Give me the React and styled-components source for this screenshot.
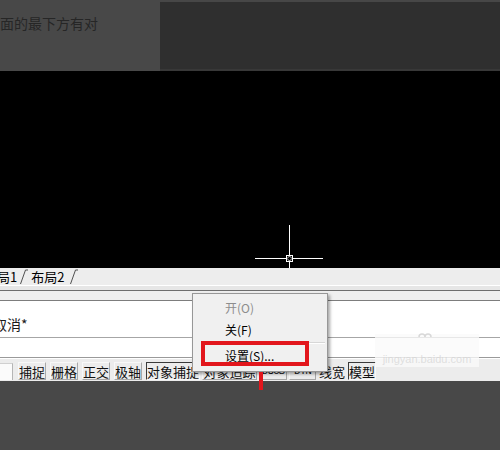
import React from "react";
import styled, { createGlobalStyle } from "styled-components";

const Global = createGlobalStyle`
  html, body { margin: 0; padding: 0; background: #484848; }
  body { width: 500px; height: 450px; overflow: hidden; }
  #root { width: 500px; height: 450px; }
`;

const CJK = `"Noto Sans CJK SC", "Noto Sans", sans-serif`;

const Screen = styled.div`
  position: relative;
  width: 500px;
  height: 450px;
  display: flex;
  flex-direction: column;
  background: #484848;
  overflow: hidden;
  font-family: ${CJK};
`;

const TopBar = styled.div`
  height: 71px;
  display: flex;
  flex: none;
`;

const TopLeft = styled.div`
  width: 160px;
  background: #484848;
  color: #262626;
  font-size: 14px;
  line-height: 16px;
  padding-top: 15px;
  box-sizing: border-box;
  white-space: nowrap;
`;

const TopRight = styled.div`
  flex: 1;
  background: #2f2f2f;
  border-top: 2px solid #474747;
  border-bottom: 2px solid #383838;
`;

const Canvas = styled.div`
  position: relative;
  height: 197px;
  flex: none;
  background: #000;
`;

const Crosshair = styled.svg`
  position: absolute;
  left: 0;
  top: 0;
`;

const TabStrip = styled.div`
  height: 17px;
  flex: none;
  display: flex;
  align-items: center;
  background: #ededed;
  border-bottom: 1px solid #ffffff;
  overflow: hidden;
  font-size: 13px;
  line-height: 15px;
  color: #000;
`;

const Tab = styled.span`
  display: flex;
  align-items: center;
  white-space: nowrap;
  margin-left: ${(p) => p.$offset || 0}px;
`;

const TabText = styled.span`
  padding: 0 ${(p) => p.$pad || 4}px 0 0;
`;

const Splitter = styled.div`
  height: 4px;
  flex: none;
  background: #e6e6e6;
  border-bottom: 1px solid #6e6e6e;
`;

const CmdHeader = styled.div`
  height: 9px;
  flex: none;
  background: #efefef;
  border-bottom: 1px solid #7d7d7d;
`;

const CmdArea = styled.div`
  flex: none;
  background: #fff;
  display: flex;
  flex-direction: column;
  border-bottom: 1px solid #9a9a9a;
`;

const CmdLine = styled.div`
  height: ${(p) => p.$h}px;
  display: flex;
  align-items: flex-end;
  padding-bottom: ${(p) => p.$pb || 0}px;
  box-sizing: border-box;
  border-bottom: ${(p) => (p.$line ? "1px solid #a6a6a6" : "none")};
  font-size: 14px;
  line-height: 16px;
  color: #1a1a1a;
  white-space: nowrap;
  overflow: hidden;
`;

const CmdText = styled.span`
  margin-left: -7px;
`;

const StatusBar = styled.div`
  height: 23px;
  flex: none;
  background: #ececec;
  border-top: 1px solid #ffffff;
  display: flex;
  align-items: flex-end;
  padding-bottom: 1px;
  box-sizing: border-box;
  gap: 4px;
`;

const CoordBox = styled.div`
  width: 13px;
  height: 17px;
  background: #fbfbfb;
  border-right: 1px solid #b5b5b5;
  border-top: 1px solid #d0d0d0;
  box-sizing: border-box;
  margin-right: 1px;
`;

const StatusGroup = styled.div`
  display: flex;
  gap: ${(p) => p.$gap}px;
  align-items: flex-end;
`;

const StatusBtn = styled.div`
  width: ${(p) => p.$w}px;
  height: 18px;
  flex: none;
  box-sizing: border-box;
  padding: 0;
  display: flex;
  align-items: center;
  justify-content: center;
  overflow: hidden;
  font-family: ${(p) => (p.$latin ? `"Liberation Mono", monospace` : CJK)};
  font-size: ${(p) => (p.$latin ? 11 : 13)}px;
  letter-spacing: ${(p) => (p.$latin ? "-1px" : "0")};
  line-height: 15px;
  color: #111;
  white-space: nowrap;
  background: #ececec;
  border: 1px solid;
  border-color: ${(p) =>
    p.$pressed
      ? "#3a3a3a #f8f8f8 #f8f8f8 #3a3a3a"
      : p.$plain
      ? "transparent"
      : "#f8f8f8 #a8a8a8 #a8a8a8 #f8f8f8"};
`;

const Bottom = styled.div`
  flex: 1;
  background: #484848;
`;

const Menu = styled.div`
  position: absolute;
  left: 192px;
  top: 293px;
  width: 136px;
  height: 79px;
  box-sizing: border-box;
  background: #f0f0f0;
  border: 1px solid #979797;
  box-shadow: 2px 2px 3px rgba(0, 0, 0, 0.35);
  padding: 2px 0;
  display: flex;
  flex-direction: column;
`;

const MenuItem = styled.div`
  height: 22px;
  display: flex;
  align-items: center;
  padding-left: 32px;
  font-size: 12px;
  color: ${(p) => (p.$disabled ? "#8d8d8d" : "#000")};
`;

const MenuSep = styled.div`
  height: 1px;
  margin: 2px 2px 0 9px;
  background: #d7d7d7;
  border-bottom: 1px solid #fff;
`;

const Highlight = styled.div`
  position: absolute;
  left: 201px;
  top: 341px;
  width: 108px;
  height: 25px;
  box-sizing: border-box;
  border: 4px solid #e2161c;
`;

const Arrow = styled.div`
  position: absolute;
  left: 259px;
  top: 372px;
  width: 4px;
  height: 18px;
  background: #e2161c;
`;

const Watermark = styled.div`
  position: absolute;
  left: 375px;
  top: 334px;
  width: 104px;
  height: 33px;
  background: rgba(250, 250, 250, 0.78);
  display: flex;
  align-items: flex-end;
  justify-content: center;
  font-family: "Liberation Sans", sans-serif;
  font-size: 11px;
  color: rgba(205, 205, 205, 0.6);
  padding-bottom: 2px;
  box-sizing: border-box;
`;

const WmLogo = styled.svg`
  position: absolute;
  left: 43px;
  top: -5px;
`;

function Slant() {
  return (
    <svg width="8" height="17" viewBox="0 0 8 17">
      <path d="M0.5 16 L5.5 2 L8 2" stroke="#505050" strokeWidth="1" fill="none" />
    </svg>
  );
}

export default function App() {
  return (
    <>
      <Global />
      <Screen>
        <TopBar>
          <TopLeft>面的最下方有对</TopLeft>
          <TopRight />
        </TopBar>
        <Canvas>
          <Crosshair width="500" height="197" viewBox="0 0 500 197">
            <line x1="289.5" y1="154" x2="289.5" y2="197" stroke="#fff" strokeWidth="1" />
            <line x1="255" y1="187.5" x2="323" y2="187.5" stroke="#fff" strokeWidth="1" />
            <rect x="286.5" y="184.5" width="6" height="6" fill="#000" stroke="#fff" strokeWidth="1" />
            <path d="M289.5 185 L292 187.5 L289.5 190 L287 187.5 Z" fill="none" stroke="#fff" strokeWidth="0.8" />
          </Crosshair>
        </Canvas>
        <TabStrip>
          <Tab $offset={-16}>
            <TabText $pad={3}>布局1</TabText>
            <Slant />
          </Tab>
          <Tab $offset={3}>
            <TabText $pad={6}>布局2</TabText>
            <Slant />
          </Tab>
        </TabStrip>
        <Splitter />
        <CmdHeader />
        <CmdArea>
          <CmdLine $h={37} $pb={5} $line>
            <CmdText>取消*</CmdText>
          </CmdLine>
          <CmdLine $h={19} />
        </CmdArea>
        <StatusBar>
          <CoordBox />
          <StatusGroup $gap={4}>
            <StatusBtn $w={28}>捕捉</StatusBtn>
            <StatusBtn $w={28}>栅格</StatusBtn>
            <StatusBtn $w={28}>正交</StatusBtn>
            <StatusBtn $w={28}>极轴</StatusBtn>
          </StatusGroup>
          <StatusGroup $gap={2}>
            <StatusBtn $w={54} $pressed>对象捕捉</StatusBtn>
            <StatusBtn $w={55}>对象追踪</StatusBtn>
            <StatusBtn $w={28} $latin>DUCS</StatusBtn>
            <StatusBtn $w={27} $latin>DYN</StatusBtn>
            <StatusBtn $w={28} $plain>线宽</StatusBtn>
            <StatusBtn $w={28} $pressed>模型</StatusBtn>
          </StatusGroup>
        </StatusBar>
        <Bottom />
        <Watermark>
          <WmLogo width="14" height="8" viewBox="0 0 14 8">
            <path d="M1 8 A3 3 0 0 1 7 8 A3 3 0 0 1 13 8" fill="none" stroke="#d8d8d8" strokeWidth="1.5" />
          </WmLogo>
          jingyan.baidu.com
        </Watermark>
        <Menu>
          <MenuItem $disabled>开(O)</MenuItem>
          <MenuItem>关(F)</MenuItem>
          <MenuSep />
          <MenuItem>设置(S)...</MenuItem>
        </Menu>
        <Highlight />
        <Arrow />
      </Screen>
    </>
  );
}
